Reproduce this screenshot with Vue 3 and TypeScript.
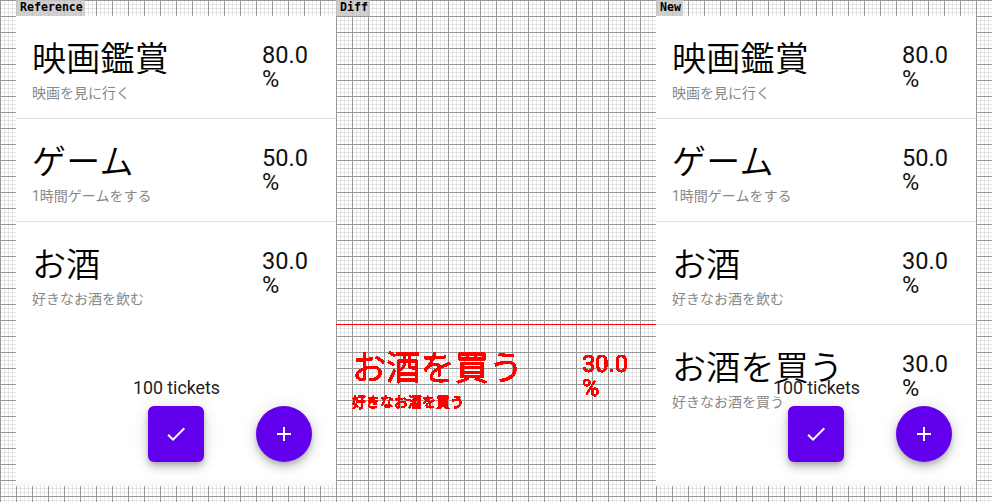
<template>
  <div class="page">
    <svg class="defs" width="0" height="0" aria-hidden="true">
      <filter id="hard-edge" color-interpolation-filters="sRGB">
        <feComponentTransfer>
          <feFuncA type="discrete" tableValues="0 1 1 1" />
        </feComponentTransfer>
      </filter>
    </svg>

    <section v-for="panel in panels" :key="panel.label" class="column">
      <div class="label">{{ panel.label }}</div>
      <div class="screen" :class="{ 'screen-diff': panel.diff }">
        <div class="rows">
          <div
            v-for="(item, index) in items.slice(0, panel.count)"
            :key="item.title"
            class="row"
            :class="{ 'row-muted': panel.diff && index < 2, 'row-changed': panel.diff && index === 2, 'row-new': panel.diff && index === 3 }"
          >
            <div class="info">
              <div class="title">{{ item.title }}</div>
              <div class="subtitle">{{ item.subtitle }}</div>
            </div>
            <div class="percent">{{ item.percent.toFixed(1) }} %</div>
          </div>
        </div>

        <div v-if="!panel.diff" class="actions">
          <div class="ticket-group">
            <span class="tickets">100 tickets</span>
            <button class="fab fab-square" type="button">
              <svg viewBox="0 0 24 24" width="24" height="24"><path d="M9 16.17 4.83 12l-1.42 1.41L9 19 21 7l-1.41-1.41z" /></svg>
            </button>
          </div>
          <button class="fab fab-round" type="button">
            <svg viewBox="0 0 24 24" width="24" height="24"><path d="M19 13h-6v6h-2v-6H5v-2h6V5h2v6h6v2z" /></svg>
          </button>
        </div>
      </div>
    </section>
  </div>
</template>

<script setup lang="ts">
interface Item {
  title: string;
  subtitle: string;
  percent: number;
}

const items: Item[] = [
  { title: '映画鑑賞', subtitle: '映画を見に行く', percent: 80 },
  { title: 'ゲーム', subtitle: '1時間ゲームをする', percent: 50 },
  { title: 'お酒', subtitle: '好きなお酒を飲む', percent: 30 },
  { title: 'お酒を買う', subtitle: '好きなお酒を買う', percent: 30 },
];

const panels = [
  { label: 'Reference', count: 3, diff: false },
  { label: 'Diff', count: 4, diff: true },
  { label: 'New', count: 4, diff: false },
];
</script>

<style>
html,
body {
  margin: 0;
  background: #fff;
}
</style>

<style scoped>
.page {
  display: flex;
  height: 502px;
  width: 992px;
  padding-left: 16px;
  box-sizing: border-box;
  overflow: hidden;
  background-color: #fff;
  background-image:
    linear-gradient(to right, #999 1px, transparent 1px),
    linear-gradient(to bottom, #999 1px, transparent 1px),
    linear-gradient(to right, #e4e4e4 1px, transparent 1px),
    linear-gradient(to bottom, #e4e4e4 1px, transparent 1px);
  background-size: 16px 16px, 16px 16px, 4px 4px, 4px 4px;
}

.defs {
  position: absolute;
}

.column {
  display: flex;
  flex-direction: column;
  width: 320px;
}

.label {
  align-self: flex-start;
  height: 16px;
  padding: 0 2px 0 4px;
  background: rgba(200, 200, 200, 0.85);
  color: #000;
  font-family: "DejaVu Sans Mono", monospace;
  font-size: 11.6px;
  font-weight: 700;
  line-height: 15px;
}

.screen {
  position: relative;
  height: 470px;
  background: linear-gradient(to bottom, #fff 462px, #f6f6f6 470px);
  font-family: Roboto, "Noto Sans CJK JP", sans-serif;
}

.screen-diff {
  background: none;
}

.row {
  display: flex;
  box-sizing: border-box;
  height: 103px;
  padding: 16px 16px 0;
  border-bottom: 1px solid #e0e0e0;
}

.row:last-child {
  border-bottom-color: transparent;
}

.info {
  flex: 1;
  min-width: 0;
}

.title {
  padding-top: 2px;
  color: #000;
  font-size: 34px;
  font-weight: 350;
  letter-spacing: 0.25px;
  line-height: 50px;
}

.subtitle {
  margin-top: -1px;
  color: #888;
  font-size: 14px;
  line-height: 20px;
}

.percent {
  flex: none;
  width: 58px;
  margin-top: 11px;
  color: #111;
  font-size: 23.6px;
  line-height: 24px;
}

.row-muted {
  border-bottom-color: transparent;
}

.row-muted > * {
  visibility: hidden;
}

.row-changed {
  border-bottom-color: #f00;
}

.row-changed > * {
  visibility: hidden;
}

.row-new {
  filter: url(#hard-edge);
}

.row-new .title,
.row-new .subtitle,
.row-new .percent {
  color: #f00;
  -webkit-text-stroke: 0.6px #f00;
}

.actions {
  position: absolute;
  right: 24px;
  bottom: 24px;
  display: flex;
  align-items: flex-end;
  gap: 36px;
}

.ticket-group {
  display: flex;
  flex-direction: column;
  align-items: center;
  gap: 6px;
}

.tickets {
  color: #222;
  font-size: 17.8px;
  line-height: 24px;
  white-space: nowrap;
}

.fab {
  display: flex;
  align-items: center;
  justify-content: center;
  width: 56px;
  height: 56px;
  padding: 0;
  border: none;
  background: #6200ee;
  box-shadow: 0 3px 5px -1px rgba(0, 0, 0, 0.2), 0 6px 10px 0 rgba(0, 0, 0, 0.14), 0 1px 18px 0 rgba(0, 0, 0, 0.12);
}

.fab svg {
  fill: #fff;
}

.fab-square {
  border-radius: 6px;
}

.fab-round {
  border-radius: 50%;
}
</style>
